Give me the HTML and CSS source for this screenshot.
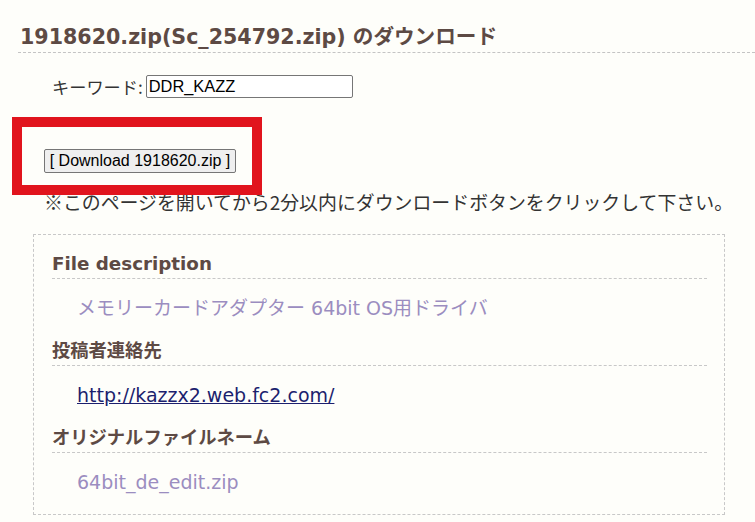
FILE: index.html
```html
<!DOCTYPE html>
<html lang="ja">
<head>
<meta charset="utf-8">
<link rel="stylesheet" href="styles.css">
</head>
<body>
<div class="page">
  <h1 class="title">1918620.zip(Sc_254792.zip) のダウンロード</h1>
  <div class="keyword">
    <label class="kw-label">キーワード:</label>
    <input class="kw-input" type="text" value="DDR_KAZZ">
  </div>
  <div class="dl">
    <button class="dl-btn" type="button">[ Download 1918620.zip ]</button>
  </div>
  <p class="note">※このページを開いてから2分以内にダウンロードボタンをクリックして下さい。</p>
  <div class="info">
    <h2 class="info-h">File description</h2>
    <p class="info-v">メモリーカードアダプター 64bit OS用ドライバ</p>
    <h2 class="info-h">投稿者連絡先</h2>
    <p class="info-v"><a class="link" href="#">http://kazzx2.web.fc2.com/</a></p>
    <h2 class="info-h">オリジナルファイルネーム</h2>
    <p class="info-v">64bit_de_edit.zip</p>
  </div>
  <div class="highlight"></div>
</div>
</body>
</html>
```
FILE: styles.css
```css
html, body {
  margin: 0;
  padding: 0;
  background: #fefefa;
}
.page {
  position: relative;
  width: 755px;
  height: 522px;
  overflow: hidden;
  font-family: "DejaVu Sans", "Noto Sans CJK JP", sans-serif;
  color: #333;
}
.title {
  margin: 25px 0 0 18px;
  padding: 0 0 2px 2px;
  font-size: 20.6px;
  line-height: 25px;
  font-weight: bold;
  color: #5d4a44;
  border-bottom: 1px dashed #c4c4c4;
}
.keyword {
  display: flex;
  align-items: center;
  margin: 21px 0 0 52px;
  height: 24px;
}
.kw-label {
  font-family: "Noto Sans CJK JP", sans-serif;
  font-size: 17.2px;
  color: #333;
  margin-right: 3px;
}
.kw-input {
  box-sizing: border-box;
  width: 207px;
  height: 23px;
  margin: 0;
  padding: 0 2px;
  border: 1px solid #767676;
  border-radius: 2px;
  font-family: "Liberation Sans", Arial, sans-serif;
  font-size: 16.4px;
  color: #000;
  background: #fff;
}
.dl {
  margin: 51px 0 0 44px;
  height: 24px;
}
.dl-btn {
  box-sizing: border-box;
  height: 24px;
  width: 192px;
  margin: 0;
  padding: 0 4px;
  border: 1px solid #767676;
  border-radius: 2px;
  background: #efefef;
  font-family: "Liberation Sans", Arial, sans-serif;
  font-size: 16px;
  color: #000;
}
.note {
  margin: 16px 0 0 44px;
  font-family: "Noto Sans CJK JP", sans-serif;
  font-size: 18.9px;
  line-height: 26px;
  color: #333;
  white-space: nowrap;
}
.info {
  box-sizing: border-box;
  margin: 19px 0 0 33px;
  width: 692px;
  height: 281px;
  border: 1px dashed #c8c8c8;
  padding: 17px 17px 0 18px;
}
.info-h {
  margin: 0;
  font-size: 18.3px;
  line-height: 24px;
  font-weight: bold;
  color: #5d4a44;
  border-bottom: 1px dashed #c8c8c8;
  padding-bottom: 2px;
  font-family: "DejaVu Sans", "Noto Sans CJK JP", sans-serif;
}
.info-v {
  margin: 0;
  padding: 17px 0 19px 25px;
  font-family: "DejaVu Sans", "Noto Sans CJK JP", sans-serif;
  font-size: 19px;
  line-height: 24px;
  color: #9b8dc0;
}
.link {
  color: #1c1f6e;
  text-decoration: underline;
}
.highlight {
  position: absolute;
  left: 12px;
  top: 117px;
  width: 250px;
  height: 78px;
  box-sizing: border-box;
  border: 10px solid #e1141d;
}
```
